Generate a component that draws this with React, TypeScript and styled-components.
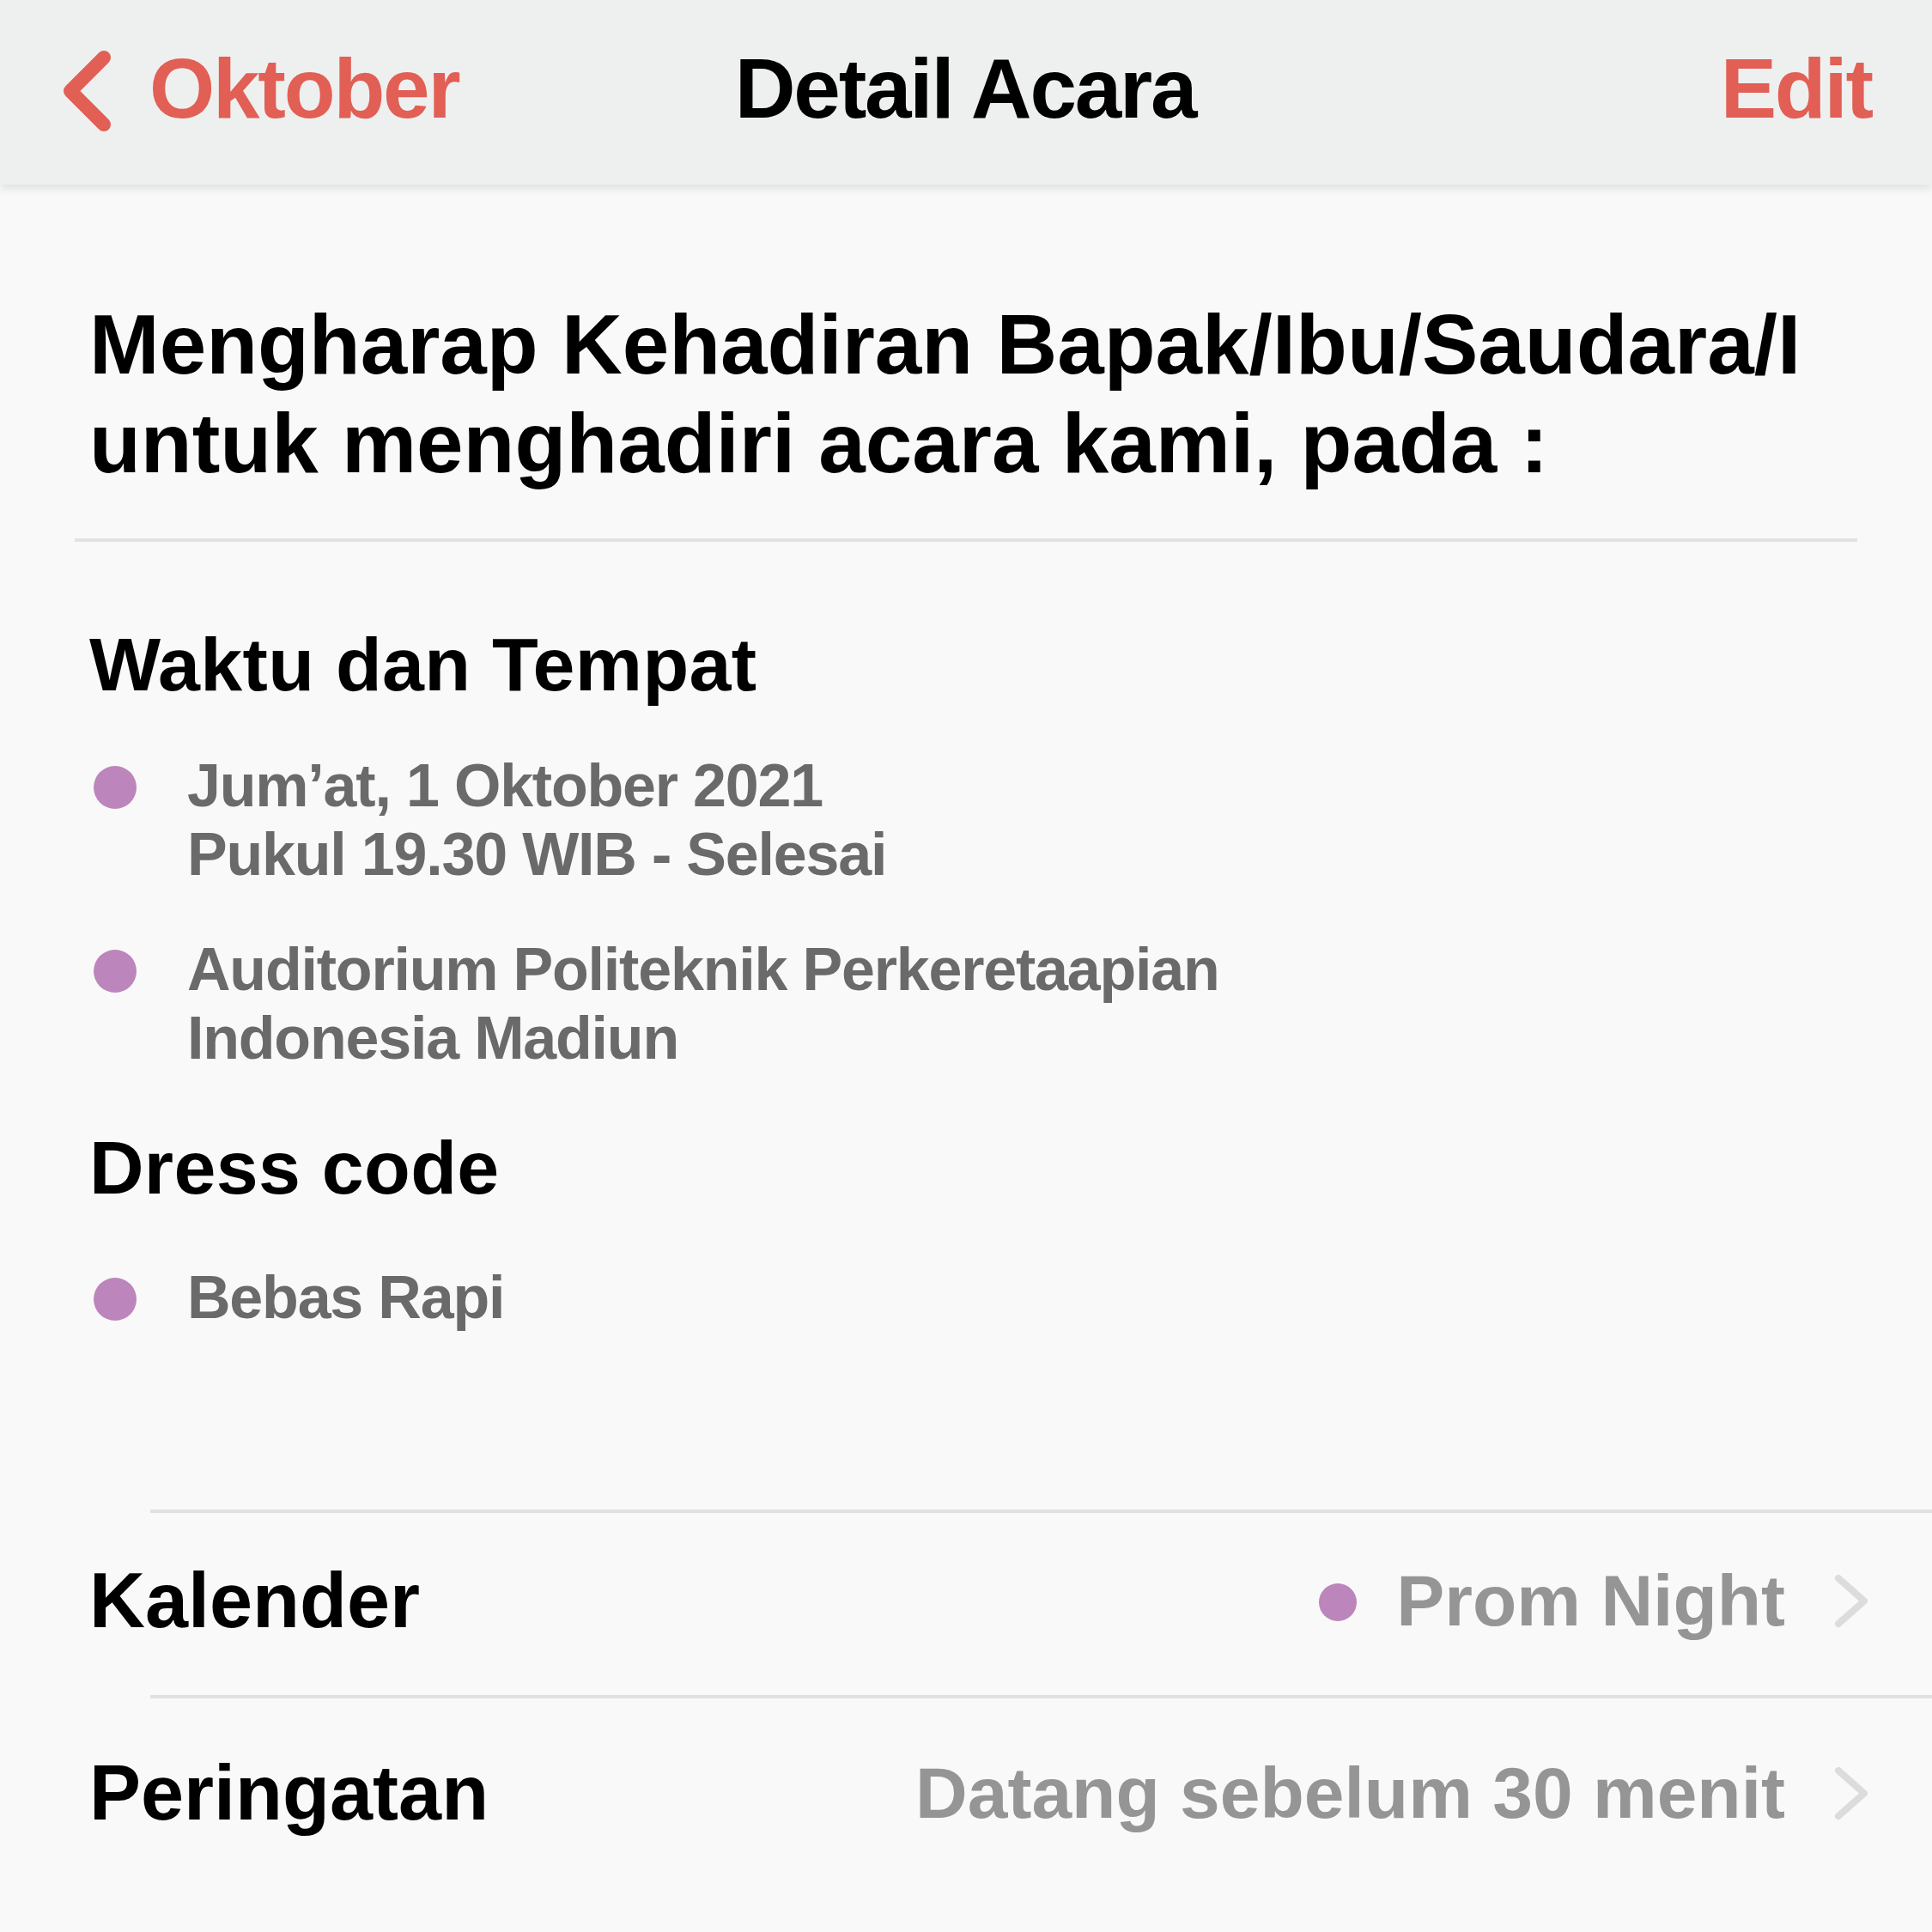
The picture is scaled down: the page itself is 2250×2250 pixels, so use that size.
import React from "react";
import styled, { createGlobalStyle } from "styled-components";

const GlobalStyle = createGlobalStyle`
  html, body {
    margin: 0;
    padding: 0;
    background: #f9f9f9;
  }
  body {
    font-family: "Liberation Sans", Arial, sans-serif;
  }
  * { box-sizing: border-box; }
`;

const Page = styled.div`
  width: 2250px;
  min-height: 2250px;
  background: #f9f9f9;
  font-family: "Liberation Sans", Arial, sans-serif;
`;

const Header = styled.header`
  height: 215px;
  background: #eef0ef;
  box-shadow: 0 5px 10px rgba(0, 0, 0, 0.1);
  display: grid;
  grid-template-columns: 1fr auto 1fr;
  align-items: center;
  padding: 0 70px 9px 68px;
  position: relative;
  z-index: 1;
`;

const HeaderText = styled.div<{ $accent?: boolean }>`
  font-size: 98px;
  line-height: 1;
  font-weight: 700;
  letter-spacing: -2.2px;
  color: ${(p) => (p.$accent ? "#e15f55" : "#000")};
`;

const BackButton = styled.div`
  display: flex;
  align-items: center;
  gap: 34px;
  justify-self: start;
`;

const EditButton = styled(HeaderText)`
  justify-self: end;
`;

const Content = styled.main`
  padding-top: 129px;
`;

const Title = styled.h1`
  margin: 0;
  padding: 0 104px;
  font-size: 98px;
  line-height: 115px;
  font-weight: 700;
  color: #000;
`;

const Divider = styled.hr`
  margin: 53px 87px 0 87px;
  border: none;
  height: 4px;
  background: #e2e2e2;
`;

const Section = styled.section<{ $top: number }>`
  padding: 0 104px;
  margin-top: ${(p) => p.$top}px;
`;

const SectionHeading = styled.h2`
  margin: 0;
  font-size: 88px;
  line-height: 101px;
  font-weight: 700;
  letter-spacing: 0.3px;
  color: #000;
`;

const BulletList = styled.ul<{ $top: number }>`
  list-style: none;
  margin: ${(p) => p.$top}px 0 0 0;
  padding: 0;
  display: flex;
  flex-direction: column;
  gap: 54px;
`;

const BulletItem = styled.li`
  display: flex;
  align-items: flex-start;
  gap: 59px;
  padding-left: 5px;
`;

const Dot = styled.span<{ $size: number }>`
  flex: none;
  width: ${(p) => p.$size}px;
  height: ${(p) => p.$size}px;
  border-radius: 50%;
  background: #bc85bb;
`;

const BulletDot = styled(Dot)`
  margin-top: 17px;
`;

const BulletText = styled.div`
  font-size: 70px;
  line-height: 80px;
  font-weight: 700;
  letter-spacing: -1.2px;
  color: #6a6a6a;
`;

const SettingsList = styled.div`
  margin-top: 207px;
  padding-left: 175px;
`;

const SettingsRow = styled.div`
  height: 216px;
  border-top: 4px solid #e0e0e0;
  display: flex;
  align-items: center;
  padding-right: 72px;
  padding-bottom: 8px;

  &:last-child {
    padding-bottom: 0;
    padding-top: 8px;
  }
`;

const RowLabel = styled.div`
  margin-left: -71px;
  font-size: 90px;
  line-height: 1;
  font-weight: 700;
  color: #000;
  flex: 1;
`;

const RowValue = styled.div`
  display: flex;
  align-items: center;
  gap: 56px;
  font-size: 84px;
  line-height: 1;
  font-weight: 700;
  color: #959595;
`;

const ValueDot = styled(Dot)`
  margin-top: 4px;
  margin-right: -10px;
`;

const ChevronLeft = () => (
  <svg width="72" height="108" viewBox="0 0 72 108" style={{ marginTop: 6 }}>
    <path
      d="M53 15 L14 54 L53 93"
      fill="none"
      stroke="#e15f55"
      strokeWidth="16"
      strokeLinecap="round"
      strokeLinejoin="round"
    />
  </svg>
);

const ChevronRight = () => (
  <svg width="43" height="65" viewBox="0 0 43 65">
    <path
      d="M6 6 L36 32.5 L6 59"
      fill="none"
      stroke="#dcdcdc"
      strokeWidth="8"
      strokeLinecap="round"
      strokeLinejoin="round"
    />
  </svg>
);

export default function App() {
  return (
    <Page>
      <GlobalStyle />
      <Header>
        <BackButton>
          <ChevronLeft />
          <HeaderText $accent>Oktober</HeaderText>
        </BackButton>
        <HeaderText>Detail Acara</HeaderText>
        <EditButton $accent>Edit</EditButton>
      </Header>
      <Content>
        <Title>
          Mengharap Kehadiran Bapak/Ibu/Saudara/I
          <br />
          untuk menghadiri acara kami, pada :
        </Title>
        <Divider />
        <Section $top={92}>
          <SectionHeading>Waktu dan Tempat</SectionHeading>
          <BulletList $top={51}>
            <BulletItem>
              <BulletDot $size={50} />
              <BulletText>
                Jum’at, 1 Oktober 2021
                <br />
                Pukul 19.30 WIB - Selesai
              </BulletText>
            </BulletItem>
            <BulletItem>
              <BulletDot $size={50} />
              <BulletText>
                Auditorium Politeknik Perkeretaapian
                <br />
                Indonesia Madiun
              </BulletText>
            </BulletItem>
          </BulletList>
        </Section>
        <Section $top={60}>
          <SectionHeading>Dress code</SectionHeading>
          <BulletList $top={61}>
            <BulletItem>
              <BulletDot $size={50} />
              <BulletText>Bebas Rapi</BulletText>
            </BulletItem>
          </BulletList>
        </Section>
        <SettingsList>
          <SettingsRow>
            <RowLabel>Kalender</RowLabel>
            <RowValue>
              <ValueDot $size={44} />
              <span>Prom Night</span>
              <ChevronRight />
            </RowValue>
          </SettingsRow>
          <SettingsRow>
            <RowLabel>Peringatan</RowLabel>
            <RowValue>
              <span>Datang sebelum 30 menit</span>
              <ChevronRight />
            </RowValue>
          </SettingsRow>
        </SettingsList>
      </Content>
    </Page>
  );
}
